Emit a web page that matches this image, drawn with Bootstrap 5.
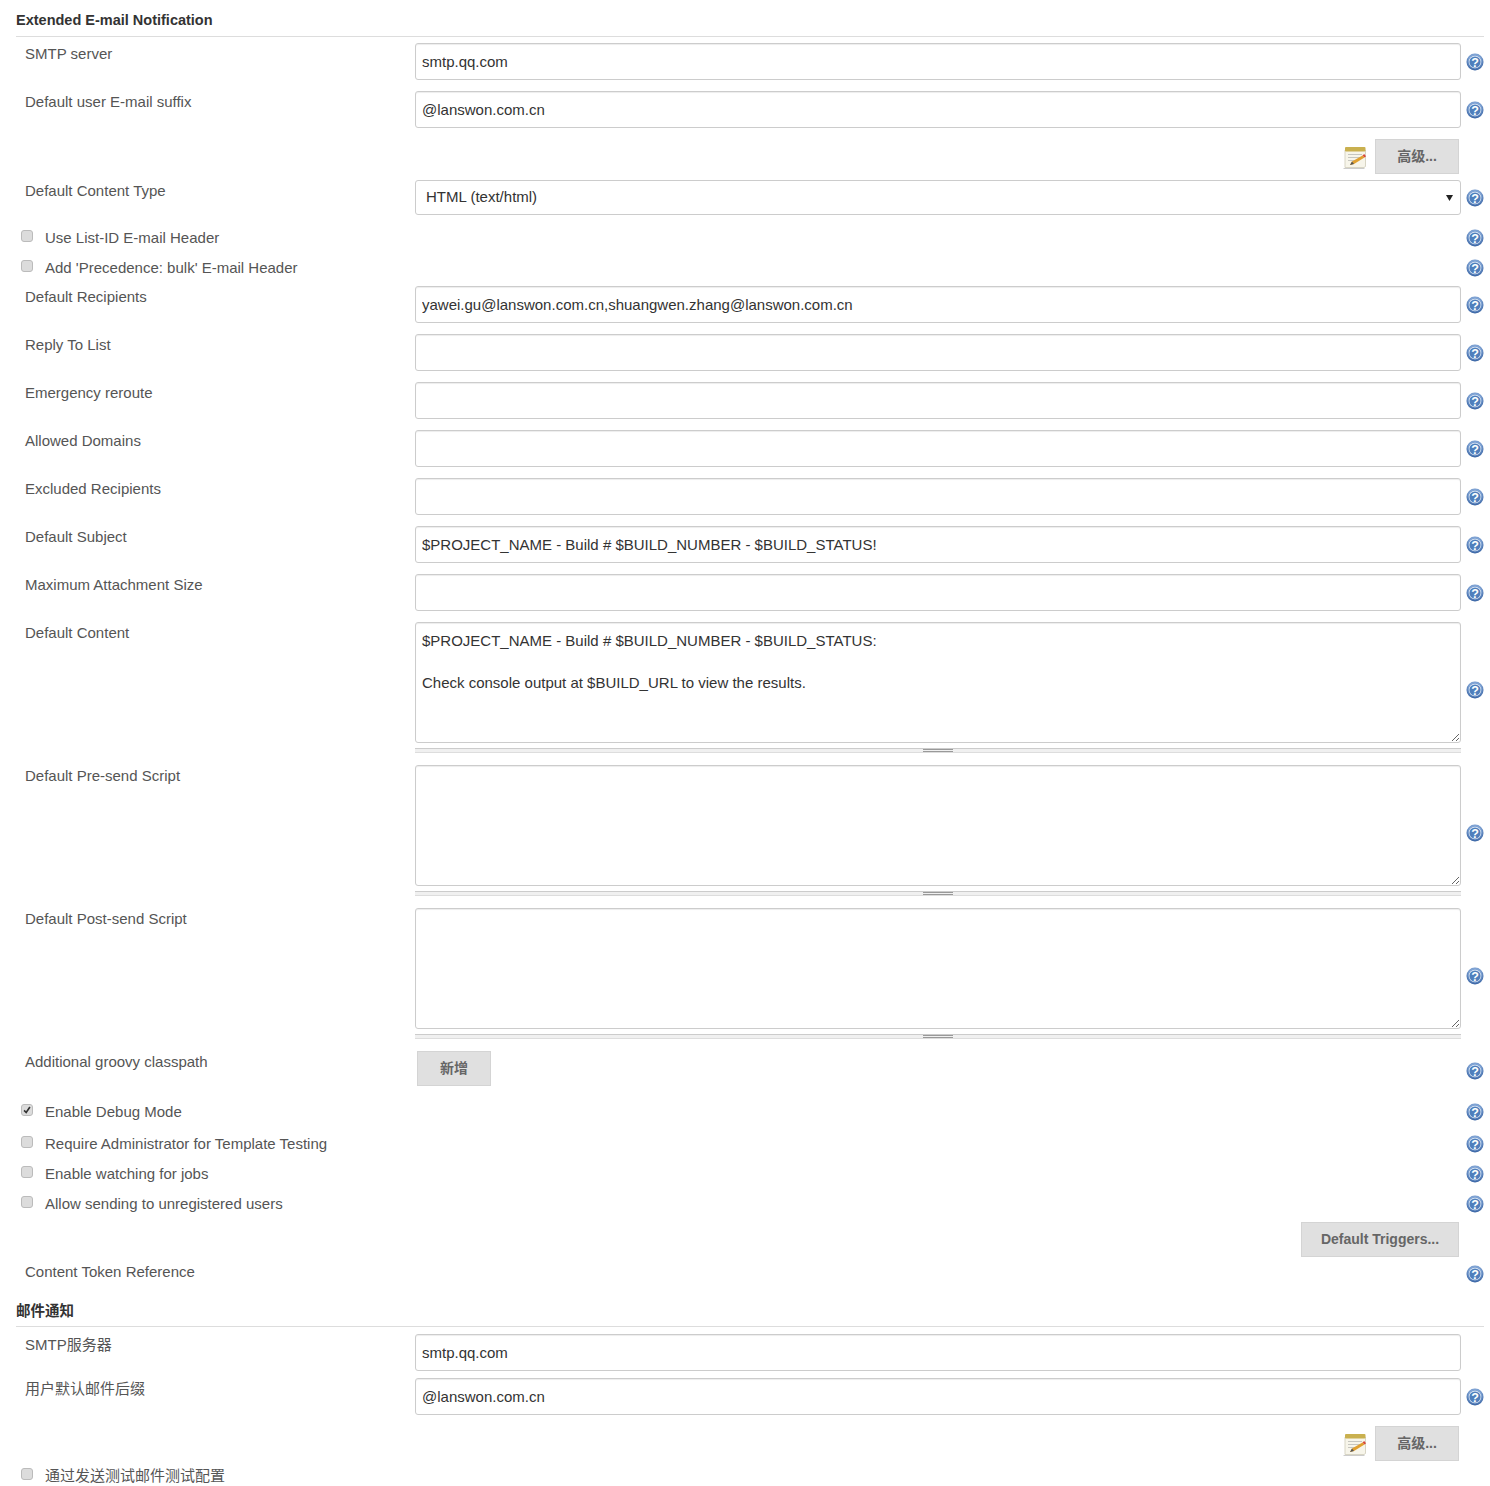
<!DOCTYPE html>
<html lang="zh-CN">
<head>
    <meta charset="UTF-8">
    <meta name="viewport" content="width=device-width, initial-scale=1.0">
    <title>Configure System</title>
    <link href="https://cdn.jsdelivr.net/npm/bootstrap@5.3.0/dist/css/bootstrap.min.css" rel="stylesheet">
    <style>
        html, body {
            height: 1486px;
            overflow: hidden;
        }
        body {
            font-family: "Liberation Sans", "Noto Sans CJK SC", sans-serif;
            font-size: 15px;
            color: #555555;
            padding: 10px 6px 0 16px;
        }
        .sec-head {
            font-size: 14.5px;
            font-weight: 700;
            line-height: 20px;
            color: #333333;
            padding-bottom: 6px;
            margin-bottom: 6px;
            border-bottom: 1px solid #dddddd;
        }
        .sec-head-next {
            margin-top: 14px;
            padding-bottom: 5px;
            margin-bottom: 7px;
        }
        .cfg-label {
            width: 399px;
            flex-shrink: 0;
            padding-left: 9px;
            line-height: 22px;
        }
        .cfg-ctl {
            width: 1046px;
            flex-shrink: 0;
        }
        .cfg-help {
            width: 23px;
            flex-shrink: 0;
            align-self: center;
            display: flex;
            justify-content: flex-end;
        }
        .cfg-help svg {
            width: 18px;
            height: 18px;
            margin-right: 0;
            display: block;
        }
        .row-input { margin-bottom: 11px; }
        .row-tight { margin-bottom: 7px; }
        .row-text { margin-bottom: 7px; }
        .row-text .cfg-ctl { padding-bottom: 5px; }
        .cfg-input.form-control {
            height: 37px;
            padding: 0 6px;
            font-size: 15px;
            color: #333333;
            border: 1px solid #cccccc;
            border-radius: 3px;
            box-shadow: inset 0 1px 1px rgba(0, 0, 0, .075);
        }
        .cfg-select.form-select {
            height: 35px;
            padding: 0 24px 0 10px;
            font-size: 15px;
            color: #333333;
            border: 1px solid #cccccc;
            border-radius: 3px;
            background-image: url("data:image/svg+xml,%3csvg xmlns='http://www.w3.org/2000/svg' viewBox='0 0 7 6'%3e%3cpath d='M0 0h7L3.5 6z' fill='%23222'/%3e%3c/svg%3e");
            background-position: right 7px center;
            background-size: 7px 6px;
        }
        .cfg-area.form-control {
            display: block;
            height: 121px;
            min-height: 121px;
            padding: 7px 6px;
            font-size: 15px;
            line-height: 21px;
            color: #333333;
            border: 1px solid #cccccc;
            border-radius: 3px;
            box-shadow: inset 0 1px 1px rgba(0, 0, 0, .075);
        }
        .grip-bar {
            height: 5px;
            margin-top: 5px;
            background: #f0f0f0;
            border-top: 1px solid #cccccc;
            border-bottom: 1px solid #dddddd;
            display: flex;
            justify-content: center;
        }
        .grip-bar span {
            width: 30px;
            height: 3px;
            border-top: 1px solid #999999;
            border-bottom: 1px solid #999999;
        }
        .cfg-btn.btn {
            height: 35px;
            padding: 0;
            font-size: 14px;
            font-weight: 700;
            color: #666666;
            background: #e0e0e0;
            border: 1px solid #d4d4d4;
            border-radius: 0;
            line-height: 33px;
        }
        .btn-adv { width: 84px; }
        .btn-add { width: 74px; margin-left: 2px; }
        .btn-trig { width: 158px; }
        .btn-line { padding-right: 2px; }
        .note-icon {
            width: 26px;
            height: 26px;
            margin-right: 7px;
        }
        .check-row {
            height: 30px;
        }
        .check-row label {
            display: flex;
            align-items: center;
            width: 1445px;
            flex-shrink: 0;
            padding-left: 5px;
            line-height: 22px;
        }
        .cfg-check.form-check-input {
            width: 12px;
            height: 12px;
            margin: -4px 12px 0 0;
            flex-shrink: 0;
            background-color: #dcdcdc;
            border: 1px solid #bbbbbb;
            border-radius: 3px;
        }
        .cfg-check.form-check-input:checked {
            background-color: #dcdcdc;
            border-color: #bbbbbb;
            background-image: url("data:image/svg+xml,%3csvg xmlns='http://www.w3.org/2000/svg' viewBox='0 0 12 12'%3e%3cpath d='M2.5 6.5l2.5 2.5 4.5-6.5' fill='none' stroke='%23333' stroke-width='2'/%3e%3c/svg%3e");
        }
        .gap-debug { margin-bottom: 2px; }
        .gap-after { margin-bottom: 3px; }
        .gap-select { margin-bottom: 8px; }
        .gap-adv { margin-bottom: 6px; }
        .gap-token { height: 26px; }
    </style>
</head>
<body>
    <!-- help icon, reused on every row -->
    <svg width="0" height="0" class="position-absolute">
        <defs>
            <radialGradient id="helpRing" cx="50%" cy="40%" r="60%">
                <stop offset="0.6" stop-color="#7fa3d4"/>
                <stop offset="1" stop-color="#2f5c9e"/>
            </radialGradient>
        </defs>
        <symbol id="help-icon" viewBox="0 0 18 18">
            <circle cx="9" cy="9" r="8.5" fill="url(#helpRing)"/>
            <circle cx="9" cy="9" r="6.2" fill="#e9f0f8"/>
            <circle cx="9" cy="9" r="5.6" fill="#4f7fbc"/>
            <text x="9" y="13.5" text-anchor="middle" font-family="Liberation Sans, sans-serif" font-size="12.5" font-weight="700" fill="#ffffff">?</text>
        </symbol>
        <symbol id="note-icon" viewBox="0 0 26 26">
            <path d="M3 23.5h19l1.500-1V6H3z" fill="#f7f5ea" stroke="#d8d5c4"/>
            <rect x="3" y="3" width="20.500" height="4.500" rx="1" fill="#c9b04f"/>
            <path d="M6 10.500h14M6 13.500h13M6 16.500h8" stroke="#c6c6c0"/>
            <path d="M8 21l2-3.500L20.500 11.500l2 2L12 20z" fill="#e0a030"/>
            <path d="M20.500 11.500l2 2 1.500-1.200-1.800-2.200z" fill="#d8483a"/>
            <path d="M8 21l2-3.500 2 2.500z" fill="#555555"/>
            <path d="M1.500 24.500h21" stroke="#cccccc"/>
        </symbol>
    </svg>

    <!-- Extended E-mail Notification -->
    <div class="sec-head">Extended E-mail Notification</div>

    <div class="d-flex row-input">
        <div class="cfg-label">SMTP server</div>
        <div class="cfg-ctl"><input class="form-control cfg-input" type="text" value="smtp.qq.com"></div>
        <div class="cfg-help"><svg><use href="#help-icon"/></svg></div>
    </div>
    <div class="d-flex row-input">
        <div class="cfg-label">Default user E-mail suffix</div>
        <div class="cfg-ctl"><input class="form-control cfg-input" type="text" value="@lanswon.com.cn"></div>
        <div class="cfg-help"><svg><use href="#help-icon"/></svg></div>
    </div>
    <div class="d-flex justify-content-end align-items-center gap-adv">
        <div class="d-flex align-items-center btn-line cfg-ctl justify-content-end">
            <svg class="note-icon"><use href="#note-icon"/></svg>
            <button type="button" class="btn cfg-btn btn-adv">高级...</button>
        </div>
        <div class="cfg-help"></div>
    </div>
    <div class="d-flex gap-select">
        <div class="cfg-label">Default Content Type</div>
        <div class="cfg-ctl">
            <select class="form-select cfg-select">
                <option>HTML (text/html)</option>
            </select>
        </div>
        <div class="cfg-help"><svg><use href="#help-icon"/></svg></div>
    </div>
    <div class="d-flex check-row">
        <label><input class="form-check-input cfg-check" type="checkbox">Use List-ID E-mail Header</label>
        <div class="cfg-help"><svg><use href="#help-icon"/></svg></div>
    </div>
    <div class="d-flex check-row gap-after">
        <label><input class="form-check-input cfg-check" type="checkbox">Add 'Precedence: bulk' E-mail Header</label>
        <div class="cfg-help"><svg><use href="#help-icon"/></svg></div>
    </div>
    <div class="d-flex row-input">
        <div class="cfg-label">Default Recipients</div>
        <div class="cfg-ctl"><input class="form-control cfg-input" type="text" value="yawei.gu@lanswon.com.cn,shuangwen.zhang@lanswon.com.cn"></div>
        <div class="cfg-help"><svg><use href="#help-icon"/></svg></div>
    </div>
    <div class="d-flex row-input">
        <div class="cfg-label">Reply To List</div>
        <div class="cfg-ctl"><input class="form-control cfg-input" type="text"></div>
        <div class="cfg-help"><svg><use href="#help-icon"/></svg></div>
    </div>
    <div class="d-flex row-input">
        <div class="cfg-label">Emergency reroute</div>
        <div class="cfg-ctl"><input class="form-control cfg-input" type="text"></div>
        <div class="cfg-help"><svg><use href="#help-icon"/></svg></div>
    </div>
    <div class="d-flex row-input">
        <div class="cfg-label">Allowed Domains</div>
        <div class="cfg-ctl"><input class="form-control cfg-input" type="text"></div>
        <div class="cfg-help"><svg><use href="#help-icon"/></svg></div>
    </div>
    <div class="d-flex row-input">
        <div class="cfg-label">Excluded Recipients</div>
        <div class="cfg-ctl"><input class="form-control cfg-input" type="text"></div>
        <div class="cfg-help"><svg><use href="#help-icon"/></svg></div>
    </div>
    <div class="d-flex row-input">
        <div class="cfg-label">Default Subject</div>
        <div class="cfg-ctl"><input class="form-control cfg-input" type="text" value="$PROJECT_NAME - Build # $BUILD_NUMBER - $BUILD_STATUS!"></div>
        <div class="cfg-help"><svg><use href="#help-icon"/></svg></div>
    </div>
    <div class="d-flex row-input">
        <div class="cfg-label">Maximum Attachment Size</div>
        <div class="cfg-ctl"><input class="form-control cfg-input" type="text"></div>
        <div class="cfg-help"><svg><use href="#help-icon"/></svg></div>
    </div>
    <div class="d-flex row-text">
        <div class="cfg-label">Default Content</div>
        <div class="cfg-ctl">
            <textarea class="form-control cfg-area">$PROJECT_NAME - Build # $BUILD_NUMBER - $BUILD_STATUS:

Check console output at $BUILD_URL to view the results.</textarea>
            <div class="grip-bar"><span></span></div>
        </div>
        <div class="cfg-help"><svg><use href="#help-icon"/></svg></div>
    </div>
    <div class="d-flex row-text">
        <div class="cfg-label">Default Pre-send Script</div>
        <div class="cfg-ctl">
            <textarea class="form-control cfg-area"></textarea>
            <div class="grip-bar"><span></span></div>
        </div>
        <div class="cfg-help"><svg><use href="#help-icon"/></svg></div>
    </div>
    <div class="d-flex row-text">
        <div class="cfg-label">Default Post-send Script</div>
        <div class="cfg-ctl">
            <textarea class="form-control cfg-area"></textarea>
            <div class="grip-bar"><span></span></div>
        </div>
        <div class="cfg-help"><svg><use href="#help-icon"/></svg></div>
    </div>
    <div class="d-flex row-input">
        <div class="cfg-label">Additional groovy classpath</div>
        <div class="cfg-ctl"><button type="button" class="btn cfg-btn btn-add">新增</button></div>
        <div class="cfg-help"><svg class="mt-1"><use href="#help-icon"/></svg></div>
    </div>
    <div class="d-flex check-row gap-debug">
        <label><input class="form-check-input cfg-check" type="checkbox" checked>Enable Debug Mode</label>
        <div class="cfg-help"><svg><use href="#help-icon"/></svg></div>
    </div>
    <div class="d-flex check-row">
        <label><input class="form-check-input cfg-check" type="checkbox">Require Administrator for Template Testing</label>
        <div class="cfg-help"><svg><use href="#help-icon"/></svg></div>
    </div>
    <div class="d-flex check-row">
        <label><input class="form-check-input cfg-check" type="checkbox">Enable watching for jobs</label>
        <div class="cfg-help"><svg><use href="#help-icon"/></svg></div>
    </div>
    <div class="d-flex check-row gap-after">
        <label><input class="form-check-input cfg-check" type="checkbox">Allow sending to unregistered users</label>
        <div class="cfg-help"><svg><use href="#help-icon"/></svg></div>
    </div>
    <div class="d-flex justify-content-end mb-1">
        <div class="d-flex btn-line cfg-ctl justify-content-end">
            <button type="button" class="btn cfg-btn btn-trig">Default Triggers...</button>
        </div>
        <div class="cfg-help"></div>
    </div>
    <div class="d-flex gap-token mt-0">
        <div class="cfg-label">Content Token Reference</div>
        <div class="cfg-ctl"></div>
        <div class="cfg-help"><svg><use href="#help-icon"/></svg></div>
    </div>

    <!-- 邮件通知 -->
    <div class="sec-head sec-head-next">邮件通知</div>

    <div class="d-flex row-tight">
        <div class="cfg-label">SMTP服务器</div>
        <div class="cfg-ctl"><input class="form-control cfg-input" type="text" value="smtp.qq.com"></div>
        <div class="cfg-help"></div>
    </div>
    <div class="d-flex row-input">
        <div class="cfg-label">用户默认邮件后缀</div>
        <div class="cfg-ctl"><input class="form-control cfg-input" type="text" value="@lanswon.com.cn"></div>
        <div class="cfg-help"><svg><use href="#help-icon"/></svg></div>
    </div>
    <div class="d-flex justify-content-end mb-0">
        <div class="d-flex align-items-center btn-line cfg-ctl justify-content-end">
            <svg class="note-icon"><use href="#note-icon"/></svg>
            <button type="button" class="btn cfg-btn btn-adv">高级...</button>
        </div>
        <div class="cfg-help"></div>
    </div>
    <div class="d-flex check-row mt-0">
        <label><input class="form-check-input cfg-check" type="checkbox">通过发送测试邮件测试配置</label>
    </div>
</body>
</html>
